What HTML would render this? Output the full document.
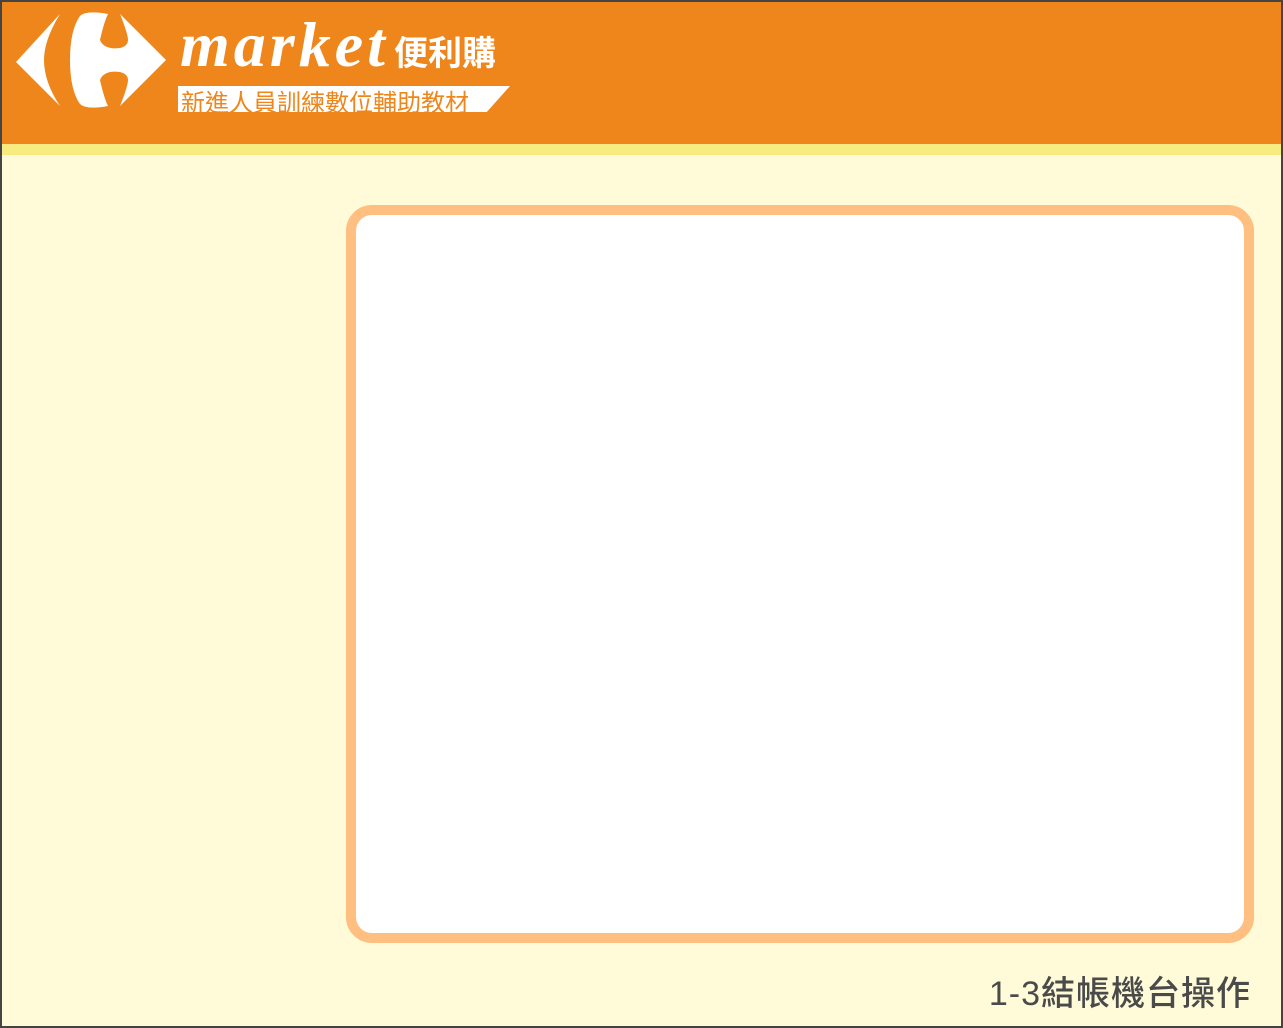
<!DOCTYPE html>
<html><head><meta charset="utf-8"><style>
html,body{margin:0;padding:0;}
body{width:1283px;height:1028px;position:relative;overflow:hidden;background:#fffbd8;font-family:"Liberation Sans","Noto Sans CJK TC",sans-serif;}
.border{position:absolute;left:0;top:0;width:1279px;height:1024px;border:2px solid #444;z-index:5;pointer-events:none;}
.hdr{position:absolute;left:0;top:0;width:1283px;height:144px;background:#ef861b;}
.stripe{position:absolute;left:0;top:144px;width:1283px;height:11px;background:#f8ec80;}
.frame{position:absolute;left:346px;top:205px;width:888px;height:718px;border:10px solid #ffbf80;border-radius:26px;background:#fff;}
.title{position:absolute;right:32px;top:966px;font-size:34px;color:#4a4a4a;letter-spacing:1px;font-weight:500;}
.mk{position:absolute;left:180px;top:8px;font-family:"Liberation Serif",serif;font-style:italic;font-weight:bold;font-size:64px;color:#fff;letter-spacing:4px;}
.cn{position:absolute;left:394px;top:26px;font-size:34px;color:#fff;font-weight:bold;}
.ban{position:absolute;left:178px;top:86px;width:332px;height:26px;background:#fff;clip-path:polygon(0 0,100% 0,93% 100%,0 100%);}
.ban span{position:absolute;left:3px;top:-3px;font-size:24px;color:#ef861b;letter-spacing:0px;white-space:nowrap;}
</style></head><body>
<div class="hdr"></div>
<div class="stripe"></div>
<svg style="position:absolute;left:0;top:0" width="180" height="120">
<path d="M60 14 Q44 40 44 60 Q44 82 60 106 L16 62 Z" fill="#fff"/>
<path d="M120 14 L166 60 L120 106 Q128 86 128 80 Q128 74 120 72 Q104 70 100 80 Q104 98 108 106 Q86 110 80 104 Q70 90 70 60 Q70 30 80 16 Q86 10 108 14 Q104 22 100 40 Q104 50 120 48 Q128 46 128 40 Q128 34 120 14 Z" fill="#fff"/>
</svg>
<div class="mk">market</div>
<div class="cn">便利購</div>
<div class="ban"><span>新進人員訓練數位輔助教材</span></div>
<div class="frame"></div>
<div class="title">1-3結帳機台操作</div>
<div class="border"></div>
</body></html>
